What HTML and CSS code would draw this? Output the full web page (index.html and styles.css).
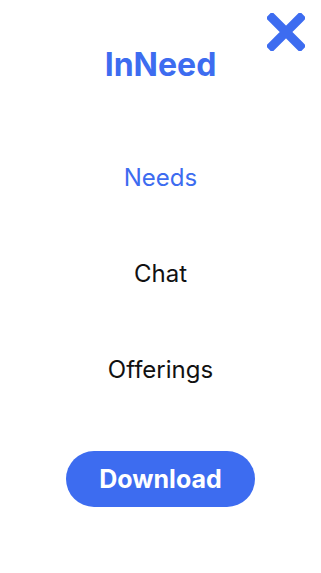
FILE: index.html
```html
<!DOCTYPE html>
<html lang="en">
<head>
    <meta charset="UTF-8">
    <meta name="viewport" content="width=device-width, initial-scale=1.0">
    <title>InNeed</title>
    <link rel="stylesheet" href="styles.css">
</head>
<body>
    <div class="menu">
        <button class="close" aria-label="Close">
            <svg width="38" height="38" viewBox="0 0 38 38">
                <path d="M5 5 L33 33 M33 5 L5 33" stroke="#3d6cf0" stroke-width="9" stroke-linecap="square"/>
            </svg>
        </button>
        <h1 class="logo">InNeed</h1>
        <nav class="links">
            <a href="#" class="active">Needs</a>
            <a href="#">Chat</a>
            <a href="#">Offerings</a>
        </nav>
        <a href="#" class="download">Download</a>
    </div>
</body>
</html>
```

FILE: styles.css
```css
body {
    margin: 0;
    font-family: Inter, "Noto Sans", sans-serif;
    background: white;
}
.menu {
    position: relative;
    display: flex;
    flex-direction: column;
    align-items: center;
    height: 573px;
}
.close {
    position: absolute;
    top: 13px;
    right: 16px;
    padding: 0;
    border: none;
    background: none;
    cursor: pointer;
}
.close svg {
    display: block;
}
.logo {
    margin: 45px 0 0;
    font-size: 32px;
    font-weight: 700;
    color: #3d6cf0;
}
.links {
    display: flex;
    flex-direction: column;
    align-items: center;
    gap: 67px;
    margin-top: 79px;
}
.links a {
    font-size: 24px;
    line-height: 29px;
    color: #111;
    text-decoration: none;
}
.links a.active {
    color: #3d6cf0;
}
.download {
    display: flex;
    align-items: center;
    justify-content: center;
    width: 189px;
    height: 56px;
    margin-top: 67px;
    border-radius: 28px;
    background: #3d6cf0;
    color: white;
    font-size: 25px;
    font-weight: 700;
    text-decoration: none;
}
```
